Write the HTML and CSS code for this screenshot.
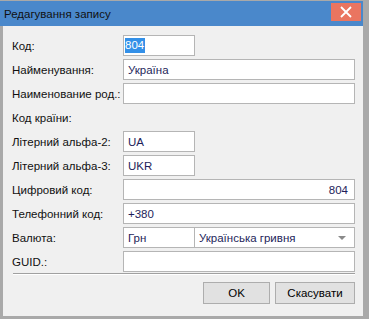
FILE: index.html
```html
<!DOCTYPE html>
<html lang="uk">
<head>
    <meta charset="UTF-8">
    <title>Редагування запису</title>
    <link rel="stylesheet" href="styles.css">
</head>
<body>
    <div class="dialog">
        <div class="titlebar">
            <span class="title">Редагування запису</span>
            <button class="close" aria-label="Закрити">
                <svg width="12" height="12" viewBox="0 0 12 12">
                    <path d="M1 1 L11 11 M11 1 L1 11" stroke="#fff" stroke-width="1.8" fill="none"/>
                </svg>
            </button>
        </div>

        <div class="content">
            <div class="form">
                <span class="label">Код:</span>
                <div class="field small"><span class="selected">804</span></div>

                <span class="label">Найменування:</span>
                <div class="field">Україна</div>

                <span class="label">Наименование род.:</span>
                <div class="field"></div>

                <span class="label span2">Код країни:</span>

                <span class="label">Літерний альфа-2:</span>
                <div class="field small">UA</div>

                <span class="label">Літерний альфа-3:</span>
                <div class="field small">UKR</div>

                <span class="label">Цифровий код:</span>
                <div class="field num">804</div>

                <span class="label">Телефонний код:</span>
                <div class="field">+380</div>

                <span class="label">Валюта:</span>
                <div class="pair">
                    <div class="field small">Грн</div>
                    <div class="field combo">
                        <span>Українська гривня</span>
                        <span class="arrow"></span>
                    </div>
                </div>

                <span class="label">GUID.:</span>
                <div class="field"></div>
            </div>

            <div class="separator"></div>

            <div class="buttons">
                <button class="btn ok">OK</button>
                <button class="btn cancel">Скасувати</button>
            </div>
        </div>
    </div>
</body>
</html>
```

FILE: styles.css
```css
body {
    margin: 0;
    width: 369px;
    height: 319px;
    background-color: #a9a9a9;
    font-family: 'Liberation Sans', Arial, sans-serif;
    font-size: 11.5px;
    color: #000;
    overflow: hidden;
}
.dialog {
    margin: 1px 0 0 3px;
    width: 360px;
    height: 315px;
    background-color: #f0f0f0;
    display: flex;
    flex-direction: column;
}
.titlebar {
    height: 25px;
    background-color: #4a88cb;
    display: flex;
    align-items: center;
    justify-content: space-between;
    padding: 0 2px 0 4px;
    margin-left: -3px;
    flex-shrink: 0;
}
.title {
    color: #111;
    font-size: 11.5px;
}
.close {
    width: 30px;
    height: 18px;
    margin-top: -3px;
    border: none;
    padding: 0;
    background-color: #ea7560;
    display: flex;
    align-items: center;
    justify-content: center;
}
.content {
    padding: 9px 8px 0 9px;
}
.form {
    display: grid;
    grid-template-columns: 111px 1fr;
    grid-auto-rows: 21px;
    row-gap: 3px;
    align-items: center;
}
.label {
    white-space: nowrap;
    color: #111;
}
.span2 {
    grid-column: 1 / 3;
}
.field {
    height: 21px;
    box-sizing: border-box;
    border: 1px solid #b5b5b5;
    background-color: #fff;
    color: #1e1e5a;
    padding: 0 4px;
    display: flex;
    align-items: center;
    white-space: nowrap;
}
.small {
    width: 72px;
}
.num {
    justify-content: flex-end;
    padding-right: 6px;
}
.selected {
    background-color: #3390e8;
    color: #fff;
    padding: 1px 1px 2px 0;
    margin-left: -3px;
}
.pair {
    display: flex;
}
.combo {
    flex: 1;
    margin-left: -1px;
    justify-content: space-between;
    padding-right: 8px;
}
.arrow {
    width: 0;
    height: 0;
    border-left: 4px solid transparent;
    border-right: 4px solid transparent;
    border-top: 4px solid #8a8a8a;
}
.separator {
    margin: 1px 0 0 1px;
    height: 1px;
    background-color: #a0a0a0;
    border-bottom: 1px solid #fff;
}
.buttons {
    display: flex;
    justify-content: flex-end;
    gap: 5px;
    margin-top: 7px;
}
.btn {
    height: 22px;
    box-sizing: border-box;
    border: 1px solid #adadad;
    background-color: #e1e1e1;
    font-family: 'Liberation Sans', Arial, sans-serif;
    font-size: 11.5px;
    color: #000;
    padding: 0;
}
.ok {
    width: 67px;
}
.cancel {
    width: 80px;
}
```
